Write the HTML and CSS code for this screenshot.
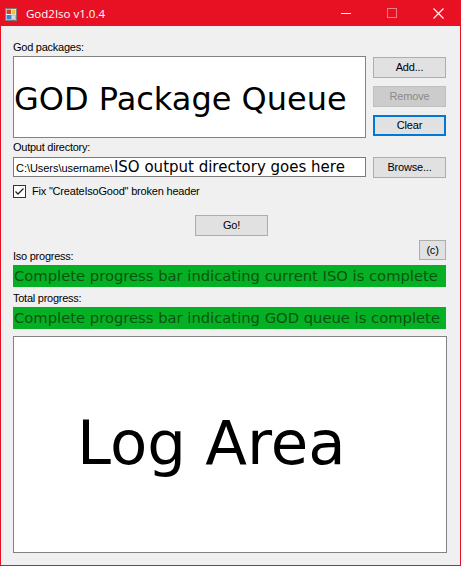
FILE: index.html
```
<!DOCTYPE html>
<html>
<head>
<meta charset="utf-8">
<title>God2Iso v1.0.4</title>
<link rel="stylesheet" href="styles.css">
</head>
<body>
<div class="window">
  <div class="titlebar">
    <svg class="app-icon" width="12" height="13" viewBox="0 0 12 13">
      <rect x="0.5" y="0.5" width="11" height="12" fill="#f4f4f4" stroke="#7c7c7c"/>
      <rect x="1.5" y="1.5" width="4.5" height="4.5" fill="#c9452e"/>
      <rect x="6.5" y="1.5" width="4" height="4.5" fill="#f2c230"/>
      <rect x="1.5" y="7" width="4.5" height="4.5" fill="#3f7fd0"/>
      <rect x="6.5" y="7" width="4" height="4.5" fill="#d9d9d9" stroke="#9a9a9a" stroke-width="0.6"/>
    </svg>
    <span class="title">God2Iso v1.0.4</span>
    <div class="caption-buttons">
      <div class="cap">
        <svg width="10" height="10" viewBox="0 0 10 10"><line x1="0" y1="5.5" x2="10" y2="5.5" stroke="#ffffff" stroke-width="1"/></svg>
      </div>
      <div class="cap">
        <svg width="10" height="10" viewBox="0 0 10 10"><rect x="0.5" y="0.5" width="9" height="9" fill="none" stroke="#f07c86" stroke-width="1"/></svg>
      </div>
      <div class="cap">
        <svg width="11" height="11" viewBox="0 0 11 11"><path d="M0.5 0.5 L10.5 10.5 M10.5 0.5 L0.5 10.5" stroke="#ffffff" stroke-width="1.1" fill="none"/></svg>
      </div>
    </div>
  </div>
  <div class="content">
    <div class="label label-first">God packages:</div>
    <div class="queue-row">
      <div class="listbox"><span class="big-text">GOD Package Queue</span></div>
      <div class="btn-col">
        <button class="btn">Add...</button>
        <button class="btn" disabled>Remove</button>
        <button class="btn btn-focused">Clear</button>
      </div>
    </div>
    <div class="label label-out">Output directory:</div>
    <div class="dir-row">
      <div class="textbox"><span class="path">C:\Users\username\</span><span class="hint">ISO output directory goes here</span></div>
      <button class="btn">Browse...</button>
    </div>
    <div class="check-row">
      <span class="checkbox">
        <svg width="11" height="11" viewBox="0 0 11 11"><polyline points="1.5,5.5 4,8 9.5,2.5" fill="none" stroke="#222" stroke-width="1.3"/></svg>
      </span>
      <span class="check-label">Fix "CreateIsoGood" broken header</span>
    </div>
    <button class="btn btn-go">Go!</button>
    <div class="progress-head">
      <div class="label label-iso">Iso progress:</div>
      <button class="btn btn-copy">(c)</button>
    </div>
    <div class="bar">Complete progress bar indicating current ISO is complete</div>
    <div class="label label-total">Total progress:</div>
    <div class="bar">Complete progress bar indicating GOD queue is complete</div>
    <div class="log"><span class="log-text">Log Area</span></div>
  </div>
</div>
</body>
</html>
```
FILE: styles.css
```
* { box-sizing: border-box; }
html, body { margin: 0; padding: 0; }
body { background: #f0f0f0; width: 461px; height: 566px; overflow: hidden; }

.window {
  width: 461px;
  height: 566px;
  background: #f0f0f0;
  border-left: 1px solid #e81123;
  border-right: 1px solid #e81123;
  border-bottom: 1px solid #e81123;
  font-family: "Liberation Sans", Arial, sans-serif;
  font-size: 11px;
  color: #000;
}

.titlebar {
  height: 26px;
  margin: 0 -1px;
  background: #e81123;
  display: flex;
  align-items: center;
}
.app-icon { margin-left: 5px; margin-top: 2px; flex: none; }
.title {
  margin-left: 9px;
  color: #fff;
  font-family: "Open Sans", "Noto Sans", sans-serif;
  font-size: 11.5px;
  line-height: 16px;
  margin-top: 1px;
}
.caption-buttons { margin-left: auto; display: flex; height: 26px; }
.cap {
  width: 46px;
  height: 26px;
  display: flex;
  align-items: center;
  justify-content: center;
}

.content { padding: 14px 14px 0 12px; }

.label { line-height: 15px; letter-spacing: -0.25px; white-space: nowrap; }
.label-first { height: 16px; }
.label-out { height: 17px; margin-top: 2px; }

.queue-row { display: flex; gap: 7px; align-items: flex-start; }
.listbox {
  width: 353px;
  height: 82px;
  background: #fff;
  border: 1px solid #828282;
  padding-top: 24px;
  overflow: hidden;
}
.big-text {
  display: block;
  font-family: "DejaVu Sans", Verdana, sans-serif;
  font-size: 32px;
  line-height: 37px;
  white-space: nowrap;
}
.btn-col { display: flex; flex-direction: column; gap: 8px; padding-top: 1px; }

.btn {
  width: 73px;
  height: 21px;
  padding: 0;
  margin: 0;
  background: #e1e1e1;
  border: 1px solid #adadad;
  border-radius: 0;
  font-family: "Liberation Sans", Arial, sans-serif;
  font-size: 11px;
  letter-spacing: -0.2px;
  color: #000;
  display: block;
  text-align: center;
  line-height: 19px;
}
.btn:disabled { background: #cccccc; border-color: #bfbfbf; color: #8a8a8a; }
.btn-focused { border: 1px solid #0078d7; box-shadow: inset 0 0 0 1px #0078d7; }

.dir-row { display: flex; gap: 7px; align-items: flex-start; }
.textbox {
  width: 353px;
  height: 20px;
  background: #fff;
  border: 1px solid #7a7a7a;
  padding-left: 2px;
  display: flex;
  align-items: baseline;
  line-height: 18px;
  white-space: nowrap;
  overflow: hidden;
}
.path { font-size: 11px; letter-spacing: -0.05px; }
.hint { font-family: "DejaVu Sans", Verdana, sans-serif; font-size: 15px; margin-left: 1px; }

.check-row { display: flex; align-items: center; margin-top: 7px; height: 13px; }
.checkbox {
  width: 13px;
  height: 13px;
  border: 1px solid #333;
  background: #fff;
  display: flex;
  align-items: center;
  justify-content: center;
  flex: none;
}
.check-label { margin-left: 6px; letter-spacing: -0.2px; line-height: 13px; white-space: nowrap; }

.btn-go { margin-top: 17px; margin-left: 182px; }

.progress-head {
  display: flex;
  justify-content: space-between;
  align-items: flex-start;
  margin-top: 4px;
  height: 25px;
}
.label-iso { margin-top: 9px; }
.btn-copy { width: 27px; height: 20px; line-height: 18px; }

.bar {
  height: 22px;
  background: #06b025;
  color: #0b5410;
  font-family: "DejaVu Sans", Verdana, sans-serif;
  font-size: 14.75px;
  line-height: 22px;
  padding-left: 1px;
  white-space: nowrap;
  overflow: hidden;
}
.label-total { height: 20px; padding-top: 4px; }

.log {
  margin-top: 7px;
  margin-right: -1px;
  height: 217px;
  background: #fff;
  border: 1px solid #828282;
  padding: 70px 0 0 63px;
}
.log-text {
  display: block;
  font-family: "DejaVu Sans", Verdana, sans-serif;
  font-size: 61px;
  line-height: 71px;
  white-space: nowrap;
}
```
